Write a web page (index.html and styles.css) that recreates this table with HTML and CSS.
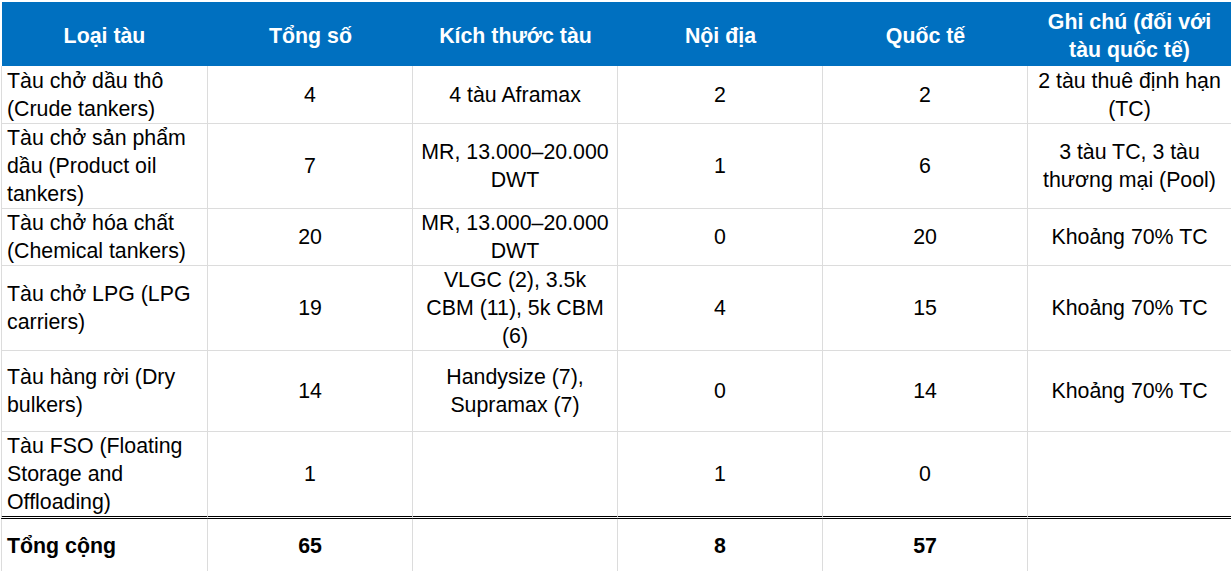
FILE: index.html
```html
<!DOCTYPE html>
<html lang="vi">
<head>
<meta charset="utf-8">
<title>Đội tàu</title>
<link rel="stylesheet" href="styles.css">
</head>
<body>
<table class="fleet">
  <colgroup>
    <col class="c1"><col class="c2"><col class="c3"><col class="c4"><col class="c5"><col class="c6">
  </colgroup>
  <thead>
    <tr class="head">
      <th>Loại tàu</th>
      <th>Tổng số</th>
      <th>Kích thước tàu</th>
      <th>Nội địa</th>
      <th>Quốc tế</th>
      <th>Ghi chú (đối với tàu quốc tế)</th>
    </tr>
  </thead>
  <tbody>
    <tr class="r1">
      <td>Tàu chở dầu thô (Crude tankers)</td>
      <td>4</td>
      <td>4 tàu Aframax</td>
      <td>2</td>
      <td>2</td>
      <td>2 tàu thuê định hạn (TC)</td>
    </tr>
    <tr class="r2">
      <td>Tàu chở sản phẩm dầu (Product oil tankers)</td>
      <td>7</td>
      <td>MR, 13.000–20.000 DWT</td>
      <td>1</td>
      <td>6</td>
      <td>3 tàu TC, 3 tàu thương mại (Pool)</td>
    </tr>
    <tr class="r3">
      <td>Tàu chở hóa chất (Chemical tankers)</td>
      <td>20</td>
      <td>MR, 13.000–20.000 DWT</td>
      <td>0</td>
      <td>20</td>
      <td>Khoảng 70% TC</td>
    </tr>
    <tr class="r4">
      <td>Tàu chở LPG (LPG carriers)</td>
      <td>19</td>
      <td>VLGC (2), 3.5k CBM (11), 5k CBM (6)</td>
      <td>4</td>
      <td>15</td>
      <td>Khoảng 70% TC</td>
    </tr>
    <tr class="r5">
      <td>Tàu hàng rời (Dry bulkers)</td>
      <td>14</td>
      <td>Handysize (7), Supramax (7)</td>
      <td>0</td>
      <td>14</td>
      <td>Khoảng 70% TC</td>
    </tr>
    <tr class="r6">
      <td>Tàu FSO (Floating Storage and Offloading)</td>
      <td>1</td>
      <td></td>
      <td>1</td>
      <td>0</td>
      <td></td>
    </tr>
  </tbody>
  <tfoot>
    <tr class="total">
      <td>Tổng cộng</td>
      <td>65</td>
      <td></td>
      <td>8</td>
      <td>57</td>
      <td></td>
    </tr>
  </tfoot>
</table>
</body>
</html>
```
FILE: styles.css
```css
html, body {
  margin: 0;
  padding: 0;
  background: #ffffff;
  overflow: hidden;
}

body {
  padding: 2px 0 0 1px;
  font-family: "Liberation Sans", Arial, sans-serif;
  font-size: 21.33px;
  line-height: 28px;
  color: #000000;
}

.fleet {
  border-collapse: separate;
  border-spacing: 0;
  table-layout: fixed;
  width: 1230px;
}

.c1 { width: 207px; }
.c2, .c3, .c4, .c5 { width: 205px; }
.c6 { width: 203px; }

.fleet th,
.fleet td {
  box-sizing: border-box;
  padding: 0 6px;
  text-align: center;
  vertical-align: middle;
  border-right: 1px solid #dcdcdc;
  border-bottom: 1px solid #dcdcdc;
}

.fleet th:first-child,
.fleet td:first-child {
  text-align: left;
  padding-left: 5px;
  border-left: 1px solid #dcdcdc;
}

.fleet th:last-child,
.fleet td:last-child {
  border-right: none;
}

.head th {
  height: 64px;
  padding-top: 3px;
  background: #0070c0;
  color: #ffffff;
  font-weight: bold;
  border-right: none;
  border-bottom: none;
  text-align: center;
}

.head th:first-child {
  text-align: center;
  border-left: 1px solid #ffffff;
}

.r1 td { height: 58px; }
.r2 td { height: 85px; }
.r3 td { height: 57px; }
.r4 td { height: 85px; }
.r5 td { height: 81px; }
.r6 td {
  height: 87px;
  border-bottom: 3px double #000000;
}

.total td {
  height: 54px;
  padding-top: 1px;
  font-weight: bold;
}
```
